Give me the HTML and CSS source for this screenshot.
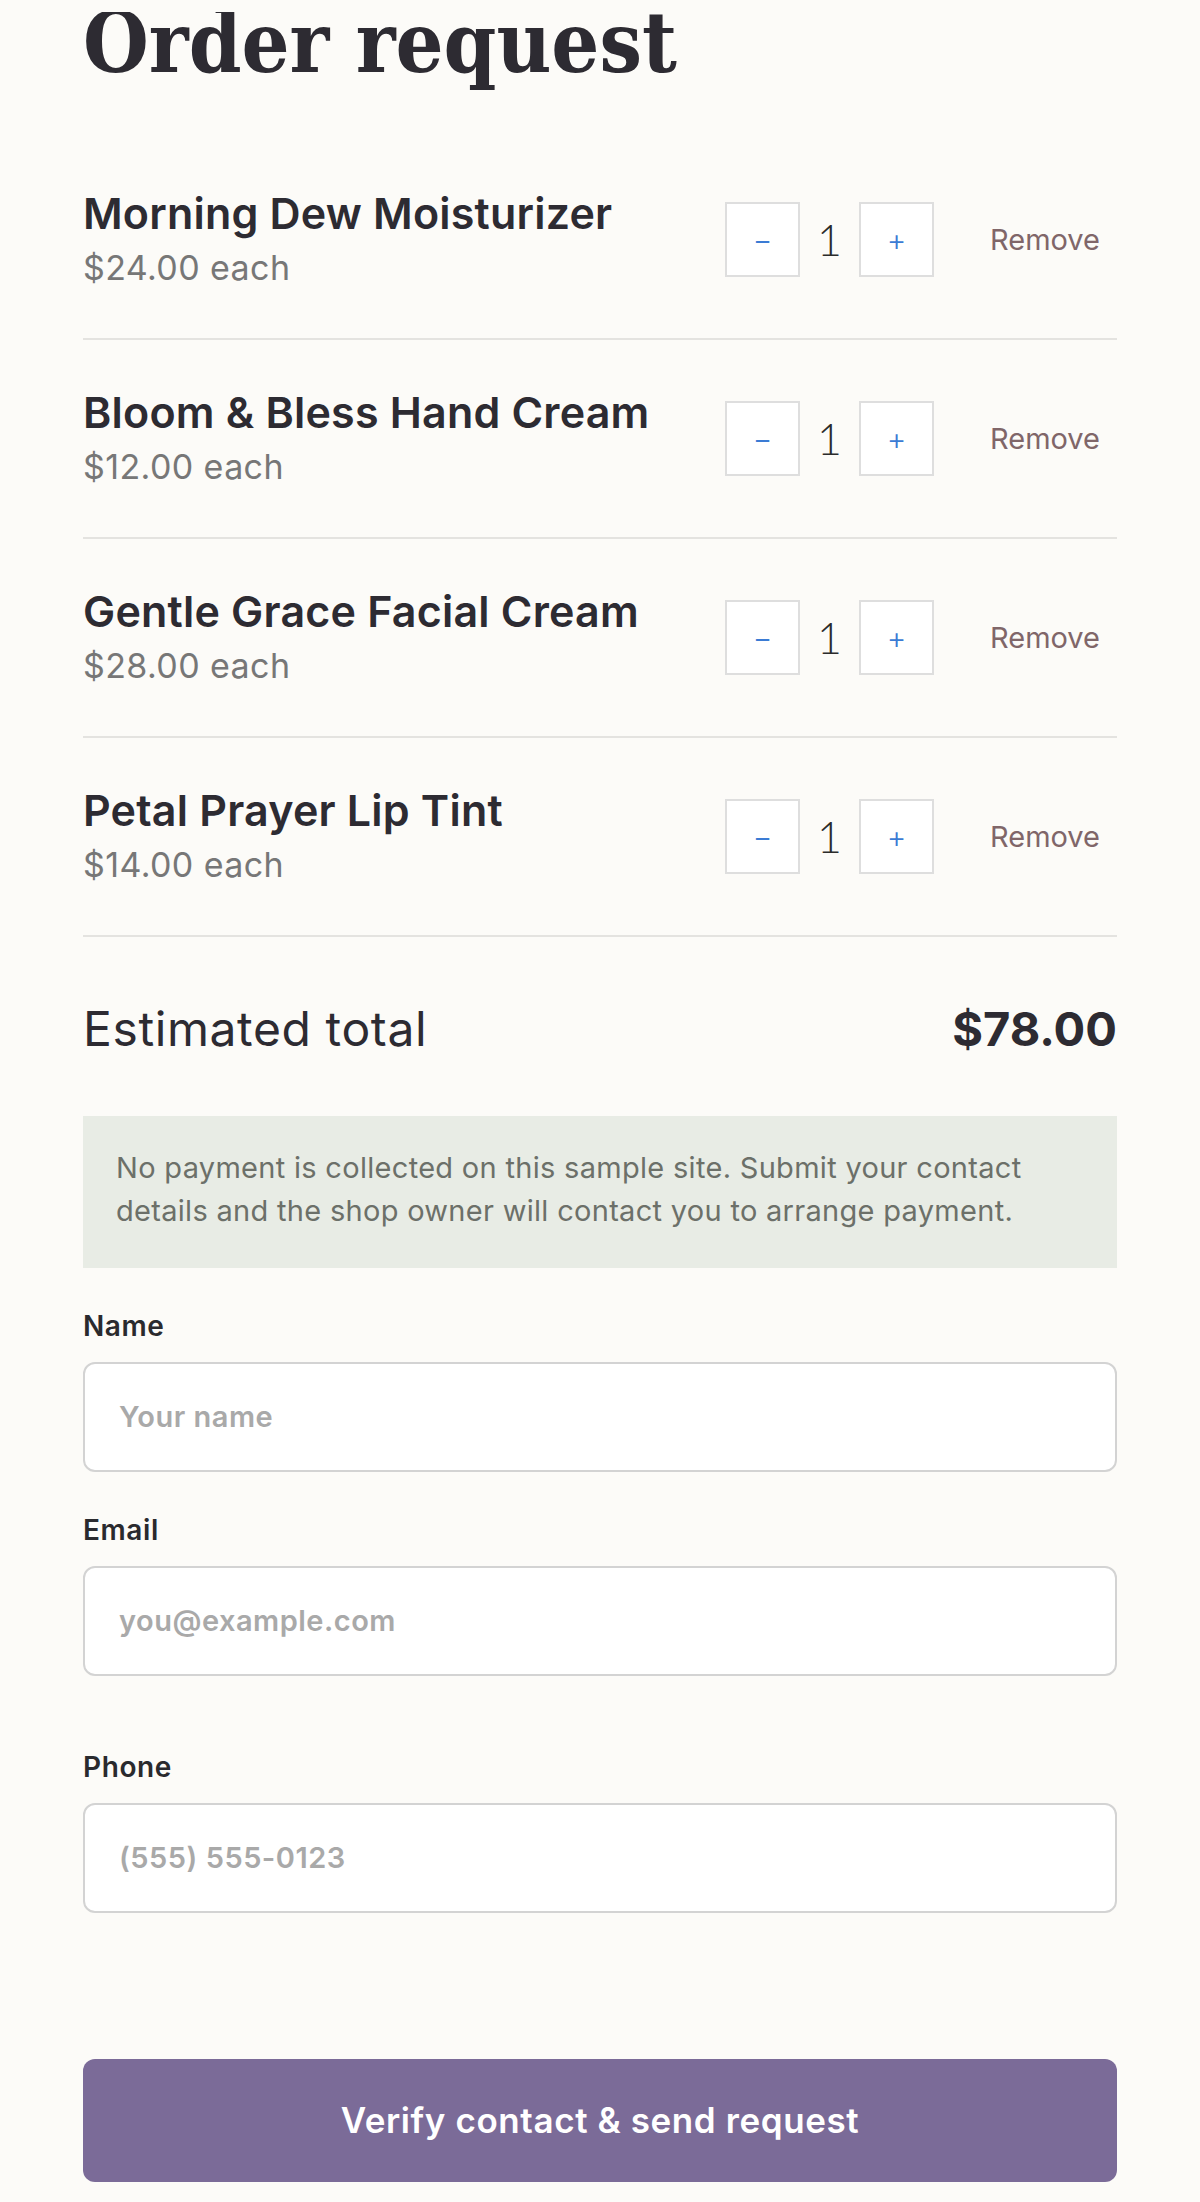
FILE: index.html
```html
<!DOCTYPE html>
<html lang="en">
<head>
  <meta charset="UTF-8" />
  <meta name="viewport" content="width=device-width, initial-scale=1" />
  <title>Order request</title>
  <link rel="stylesheet" href="styles.css">
</head>
<body>

<div class="topbar"></div>

<main class="page">
  <h1 class="page-title">Order request</h1>

  <ul class="cart">
    <li class="cart-item">
      <div class="item-info">
        <h2 class="item-name">Morning Dew Moisturizer</h2>
        <p class="item-price">$24.00 each</p>
      </div>
      <div class="item-actions">
        <div class="qty">
          <button class="qty-btn" type="button">&minus;</button>
          <span class="qty-value">1</span>
          <button class="qty-btn" type="button">+</button>
        </div>
        <button class="remove-btn" type="button">Remove</button>
      </div>
    </li>
    <li class="cart-item">
      <div class="item-info">
        <h2 class="item-name">Bloom &amp; Bless Hand Cream</h2>
        <p class="item-price">$12.00 each</p>
      </div>
      <div class="item-actions">
        <div class="qty">
          <button class="qty-btn" type="button">&minus;</button>
          <span class="qty-value">1</span>
          <button class="qty-btn" type="button">+</button>
        </div>
        <button class="remove-btn" type="button">Remove</button>
      </div>
    </li>
    <li class="cart-item">
      <div class="item-info">
        <h2 class="item-name">Gentle Grace Facial Cream</h2>
        <p class="item-price">$28.00 each</p>
      </div>
      <div class="item-actions">
        <div class="qty">
          <button class="qty-btn" type="button">&minus;</button>
          <span class="qty-value">1</span>
          <button class="qty-btn" type="button">+</button>
        </div>
        <button class="remove-btn" type="button">Remove</button>
      </div>
    </li>
    <li class="cart-item">
      <div class="item-info">
        <h2 class="item-name">Petal Prayer Lip Tint</h2>
        <p class="item-price">$14.00 each</p>
      </div>
      <div class="item-actions">
        <div class="qty">
          <button class="qty-btn" type="button">&minus;</button>
          <span class="qty-value">1</span>
          <button class="qty-btn" type="button">+</button>
        </div>
        <button class="remove-btn" type="button">Remove</button>
      </div>
    </li>
  </ul>

  <div class="total-row">
    <span class="total-label">Estimated total</span>
    <strong class="total-amount">$78.00</strong>
  </div>

  <p class="notice">No payment is collected on this sample site. Submit your contact details and the shop owner will contact you to arrange payment.</p>

  <form class="contact-form">
    <div class="field">
      <label for="name">Name</label>
      <input type="text" id="name" placeholder="Your name" />
    </div>
    <div class="field field-email">
      <label for="email">Email</label>
      <input type="email" id="email" placeholder="you@example.com" />
    </div>
    <div class="field">
      <label for="phone">Phone</label>
      <input type="tel" id="phone" placeholder="(555) 555-0123" />
    </div>
    <button class="submit-btn" type="submit">Verify contact &amp; send request</button>
  </form>
</main>

</body>
</html>
```

FILE: styles.css
```css
* {
  box-sizing: border-box;
}

body {
  margin: 0;
  background: #fcfbf8;
  color: #2d2b32;
  font-family: Inter, Lato, "Noto Sans", sans-serif;
}

/* barra fija arriba (tapa el borde del título al hacer scroll) */
.topbar {
  position: fixed;
  top: 0;
  left: 0;
  right: 0;
  height: 12px;
  background: #fcfbf8;
  z-index: 10;
}

.page {
  padding: 0 83px;
}

.page-title {
  font-family: "DejaVu Serif Condensed", "DejaVu Serif", serif;
  font-weight: 700;
  font-size: 84px;
  line-height: 92px;
  margin: -3px 0 52px;
  color: #2d2b32;
}

/* Lista del carrito */
.cart {
  list-style: none;
  margin: 0;
  padding: 0;
}

.cart-item {
  display: flex;
  align-items: center;
  justify-content: space-between;
  padding: 47px 0 47px;
  border-bottom: 2px solid #e4e3e0;
}

.item-name {
  margin: 0;
  font-size: 43px;
  font-weight: 600;
  line-height: 50px;
  letter-spacing: 0.2px;
}

.item-price {
  margin: 7px 0 0;
  font-size: 34px;
  line-height: 46px;
  letter-spacing: 0.4px;
  color: #777;
}

.item-actions {
  display: flex;
  align-items: center;
  gap: 39px;
}

.qty {
  display: flex;
  align-items: center;
}

.qty-btn {
  width: 75px;
  height: 75px;
  padding: 0;
  border: 2px solid #dedede;
  background: #fff;
  color: #3b7bd4;
  font-family: inherit;
  font-size: 30px;
  font-weight: 300;
  line-height: 1;
  cursor: pointer;
}

.qty-value {
  width: 59px;
  text-align: center;
  font-family: Lato, sans-serif;
  font-size: 43px;
  font-weight: 300;
  color: #2b2b2b;
}

.remove-btn {
  background: none;
  border: none;
  padding: 8px 17px;
  font-family: inherit;
  font-size: 29px;
  color: #806669;
  cursor: pointer;
}

/* Total */
.total-row {
  display: flex;
  justify-content: space-between;
  align-items: baseline;
  padding-top: 63px;
  line-height: 1.2;
}

.total-label {
  font-size: 48px;
  letter-spacing: 0.6px;
}

.total-amount {
  font-size: 47px;
  font-weight: 700;
}

.notice {
  margin: 58px 0 0;
  padding: 30px 33px 36px;
  background: #e8ece5;
  color: #6c7069;
  font-size: 29px;
  line-height: 43px;
  letter-spacing: 0.3px;
}

/* Formulario */
.contact-form {
  margin-top: 41px;
}

.field + .field {
  margin-top: 41px;
}

.field label {
  display: block;
  margin-bottom: 18px;
  font-size: 28px;
  font-weight: 600;
  line-height: 35px;
  letter-spacing: 0.6px;
  color: #2a2a2e;
}

.field input {
  width: 100%;
  height: 110px;
  padding: 0 34px;
  border: 2px solid #d3d3d3;
  border-radius: 12px;
  background: #fff;
  font-family: inherit;
  font-size: 29px;
  letter-spacing: 0.5px;
  color: #2d2b32;
}

.field input::placeholder {
  color: #a9a9a9;
  font-weight: 600;
}

.field-email {
  padding-bottom: 33px;
}

.submit-btn {
  display: block;
  width: 100%;
  height: 123px;
  margin-top: 146px;
  border: none;
  border-radius: 12px;
  background: #7b6b98;
  color: #fff;
  font-family: inherit;
  font-size: 35px;
  font-weight: 600;
  letter-spacing: 0.6px;
  cursor: pointer;
}
```
